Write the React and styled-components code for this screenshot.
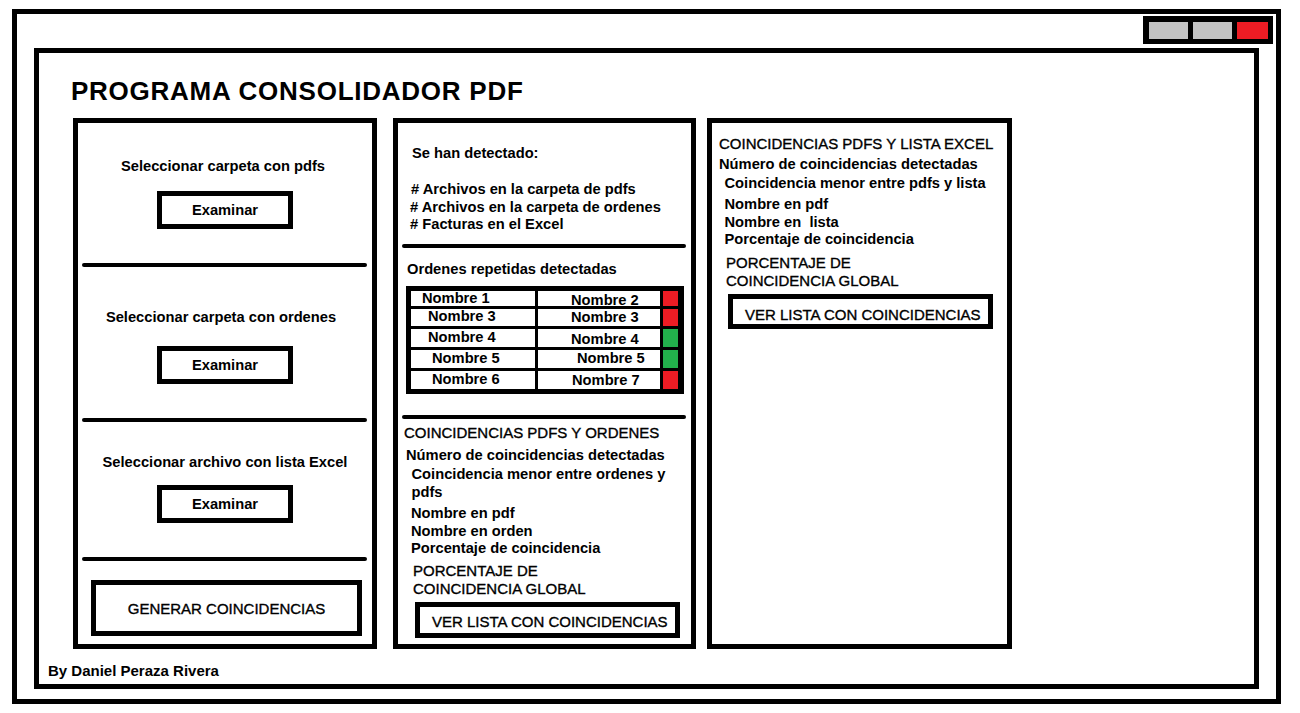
import React from 'react';
import styled, { createGlobalStyle } from 'styled-components';

const SOURCES = [
  { label: 'Seleccionar carpeta con pdfs', top: 35, gap: 16, nudge: 4 },
  { label: 'Seleccionar carpeta con ordenes', top: 42, gap: 20, nudge: 8 },
  { label: 'Seleccionar archivo con lista Excel', top: 32, gap: 14, nudge: 0 },
];

const REPEATED = [
  { a: 'Nombre 1', b: 'Nombre 2', ok: false, h: 15, ax: 11, ay: 0, bx: 33, by: 2 },
  { a: 'Nombre 3', b: 'Nombre 3', ok: false, h: 17, ax: 17, ay: 0, bx: 33, by: 1.5 },
  { a: 'Nombre 4', b: 'Nombre 4', ok: true, h: 18, ax: 17, ay: 1.5, bx: 33, by: 3 },
  { a: 'Nombre 5', b: 'Nombre 5', ok: true, h: 18, ax: 21, ay: 1.5, bx: 39, by: 1.5 },
  { a: 'Nombre 6', b: 'Nombre 7', ok: false, h: 18, ax: 21, ay: 1, bx: 34, by: 2 },
];

const App = () => (
  <>
    <GlobalStyle />
    <Window>
      <TitleBar>
        <WindowControls>
          <WinButton $w={39} />
          <WinButton $w={39} />
          <WinButton $w={31} $close />
        </WindowControls>
      </TitleBar>

      <Frame>
        <Title>PROGRAMA CONSOLIDADOR PDF</Title>

        <Columns>
          <Panel $w={304}>
            {SOURCES.map(s => (
              <React.Fragment key={s.label}>
                <Section $top={s.top}>
                  <SourceLabel $nudge={s.nudge}>{s.label}</SourceLabel>
                  <BrowseButton $gap={s.gap}>Examinar</BrowseButton>
                </Section>
                <Divider $mt={34} />
              </React.Fragment>
            ))}
            <GenerateButton>GENERAR COINCIDENCIAS</GenerateButton>
          </Panel>

          <Panel $w={303}>
            <Line $mt={21} $indent={14}>Se han detectado:</Line>
            <Counts>
              <Line $indent={13}># Archivos en la carpeta de pdfs</Line>
              <Line $indent={12}># Archivos en la carpeta de ordenes</Line>
              <Line $indent={12}># Facturas en el Excel</Line>
            </Counts>
            <Divider $mt={10} />
            <Line $mt={12} $indent={9}>Ordenes repetidas detectadas</Line>
            <RepeatTable>
              {REPEATED.map((r, i) => (
                <React.Fragment key={i}>
                  <NameCell $h={r.h} $x={r.ax} $y={r.ay}>{r.a}</NameCell>
                  <NameCell $h={r.h} $x={r.bx} $y={r.by}>{r.b}</NameCell>
                  <MatchMark $h={r.h} $ok={r.ok} />
                </React.Fragment>
              ))}
            </RepeatTable>
            <Divider $mt={21} />
            <Line $mt={5} $indent={6} $plain>COINCIDENCIAS PDFS Y ORDENES</Line>
            <Line $mt={4} $indent={8}>Número de coincidencias detectadas</Line>
            <Line $mt={1} $indent={13.5}>
              Coincidencia menor entre ordenes y<br />pdfs
            </Line>
            <Line $mt={3} $indent={13}>Nombre en pdf</Line>
            <Line $indent={13}>Nombre en orden</Line>
            <Line $mt={-1} $indent={13}>Porcentaje de coincidencia</Line>
            <Line $mt={5} $indent={15} $plain>
              PORCENTAJE DE<br />COINCIDENCIA GLOBAL
            </Line>
            <ListButton $mt={4} $indent={17} $h={36}>VER LISTA CON COINCIDENCIAS</ListButton>
          </Panel>

          <Panel $w={305}>
            <Line $mt={11.5} $indent={7} $plain>COINCIDENCIAS PDFS Y LISTA EXCEL</Line>
            <Line $mt={2} $indent={7}>Número de coincidencias detectadas</Line>
            <Line $mt={1} $indent={12.5}>Coincidencia menor entre pdfs y lista</Line>
            <Line $mt={3.5} $indent={12.5}>Nombre en pdf</Line>
            <Line $indent={12.5}>{'Nombre en\u00a0 lista'}</Line>
            <Line $mt={-1} $indent={12.5}>Porcentaje de coincidencia</Line>
            <Line $mt={6} $indent={14} $plain>
              PORCENTAJE DE<br />COINCIDENCIA GLOBAL
            </Line>
            <ListButton $mt={4} $indent={16} $h={35}>VER LISTA CON COINCIDENCIAS</ListButton>
          </Panel>
        </Columns>

        <Footer>By Daniel Peraza Rivera</Footer>
      </Frame>
    </Window>
  </>
);

export default App;

const GlobalStyle = createGlobalStyle`
  html, body {
    margin: 0;
    padding: 0;
    background: #fff;
  }
  body {
    font-family: "Liberation Sans", Arial, sans-serif;
    color: #000;
  }
  * {
    box-sizing: border-box;
  }
`;

const Window = styled.div`
  margin: 9px 0 0 12px;
  width: 1269px;
  height: 695px;
  border: 5px solid #000;
  display: flex;
  flex-direction: column;
`;

const TitleBar = styled.div`
  display: flex;
  justify-content: flex-end;
  padding: 2px 3px 0 0;
`;

const WindowControls = styled.div`
  display: flex;
  gap: 5px;
  height: 28px;
  padding: 6px 5px 5px 6px;
  background: #000;
`;

const WinButton = styled.div`
  width: ${p => p.$w}px;
  height: 17px;
  background: ${p => (p.$close ? '#ed1c24' : '#c3c3c3')};
`;

const Frame = styled.div`
  flex: 1;
  margin: 4px 17px 10px;
  border: 5px solid #000;
  display: flex;
  flex-direction: column;
`;

const Title = styled.h1`
  margin: 25px 0 0 32px;
  font-size: 26px;
  line-height: 26px;
  font-weight: 700;
  letter-spacing: 0.75px;
  white-space: nowrap;
`;

const Columns = styled.div`
  display: flex;
  margin: 14px 0 0 34px;
  gap: 16px;

  & > div:last-child {
    margin-left: -5px;
  }
`;

const Panel = styled.div`
  width: ${p => p.$w}px;
  height: 531px;
  border: 5px solid #000;
  display: flex;
  flex-direction: column;
  font-size: 14.7px;
  font-weight: 700;
`;

const Section = styled.div`
  display: flex;
  flex-direction: column;
  align-items: center;
  padding-top: ${p => p.$top}px;
`;

const SourceLabel = styled.div`
  margin-right: ${p => p.$nudge}px;
  line-height: 17px;
  white-space: nowrap;
`;

const BrowseButton = styled.div`
  margin-top: ${p => p.$gap}px;
  width: 136px;
  height: 38px;
  border: 5px solid #000;
  display: flex;
  align-items: center;
  justify-content: center;
  line-height: 17px;
`;

const Divider = styled.div`
  flex: none;
  height: 4px;
  margin: ${p => p.$mt}px 5px 0 4px;
  border-radius: 2px;
  background: #000;
`;

const GenerateButton = styled.div`
  margin: 19px 10px 0 13px;
  height: 56px;
  border: 5px solid #000;
  display: flex;
  align-items: center;
  justify-content: center;
  font-size: 15px;
  font-weight: 400;
  line-height: 17px;
  -webkit-text-stroke: 0.35px #000;
`;

const Line = styled.div`
  margin: ${p => p.$mt || 0}px 0 0 ${p => p.$indent}px;
  line-height: 18px;
  font-size: ${p => (p.$plain ? '15px' : 'inherit')};
  font-weight: ${p => (p.$plain ? 400 : 700)};
  -webkit-text-stroke: ${p => (p.$plain ? '0.35px #000' : '0')};
  white-space: nowrap;
`;

const Counts = styled.div`
  margin-top: 19px;

  & > div {
    line-height: 17.5px;
  }
`;

const RepeatTable = styled.div`
  margin: 8px 0 0 8px;
  width: 278px;
  padding: 5px 6px 5px 5px;
  background: #000;
  display: grid;
  grid-template-columns: 124px 122px 15px;
  column-gap: 3px;
  row-gap: 3px;
`;

const NameCell = styled.div`
  height: ${p => p.$h}px;
  padding: ${p => p.$y}px 0 0 ${p => p.$x}px;
  background: #fff;
  line-height: 15px;
  white-space: nowrap;
  overflow: visible;
`;

const MatchMark = styled.div`
  height: ${p => p.$h}px;
  background: ${p => (p.$ok ? '#22b14c' : '#ed1c24')};
`;

const ListButton = styled.div`
  margin: ${p => p.$mt}px 0 0 ${p => p.$indent}px;
  width: 265px;
  height: ${p => p.$h}px;
  border: 5px solid #000;
  padding: 6.5px 0 0 12px;
  font-weight: 400;
  font-size: 15px;
  line-height: 18px;
  -webkit-text-stroke: 0.35px #000;
  white-space: nowrap;
`;

const Footer = styled.div`
  margin: 14px 0 0 9px;
  font-size: 15px;
  line-height: 15px;
  font-weight: 700;
`;
